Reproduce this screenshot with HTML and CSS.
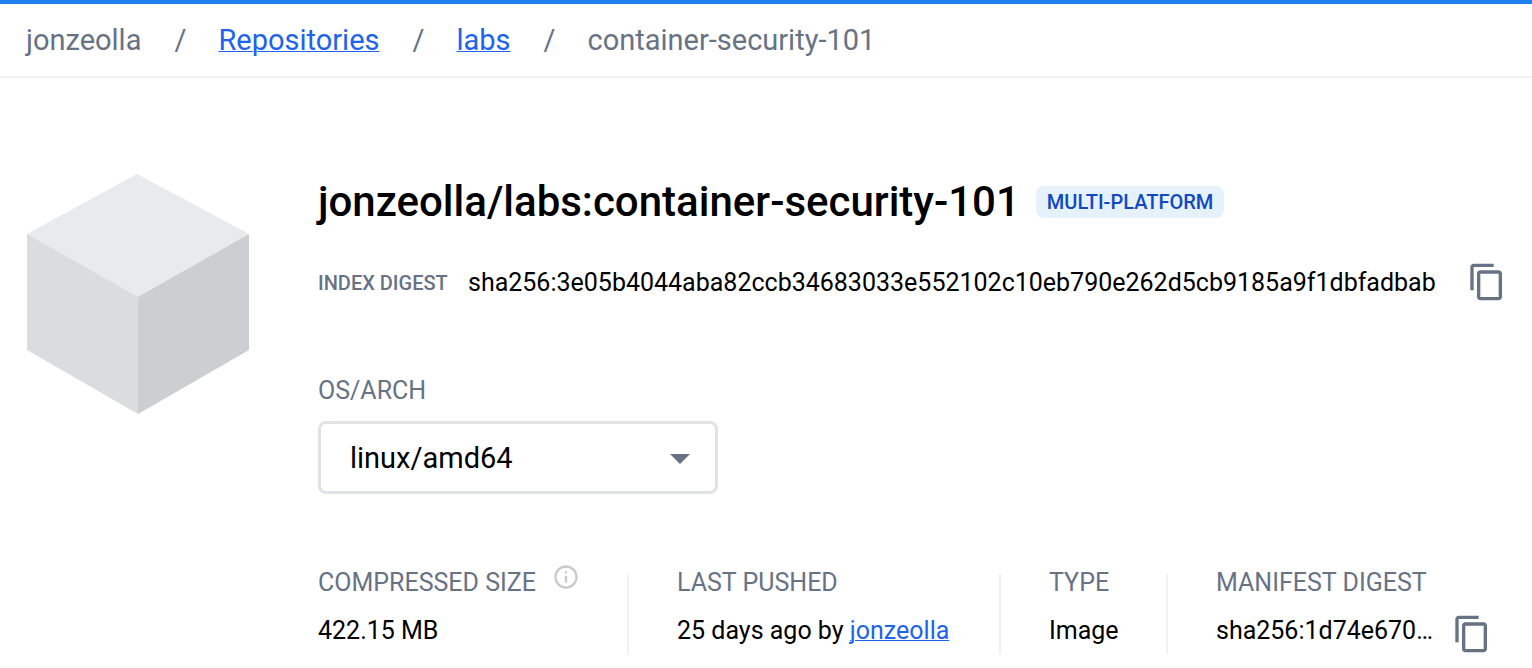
FILE: index.html
```html
<!DOCTYPE html>
<html lang="en">
<head>
<meta charset="utf-8">
<meta name="viewport" content="width=device-width, initial-scale=1">
<title>jonzeolla/labs:container-security-101</title>
<link rel="stylesheet" href="styles.css">
</head>
<body>
<header class="topbar">
  <nav aria-label="Breadcrumb">
    <ol class="crumbs">
      <li class="crumb">jonzeolla</li>
      <li class="crumb"><a href="#">Repositories</a></li>
      <li class="crumb"><a href="#">labs</a></li>
      <li class="crumb">container-security-101</li>
    </ol>
  </nav>
</header>
<main class="page">
  <svg class="cube" viewBox="0 0 222 240" aria-hidden="true">
    <path fill="#e8eaec" d="M110 0 222 60 111 124 0 60z"/>
    <path fill="#dbdcde" d="M0 60 111 123V240L0 176z"/>
    <path fill="#cbcfd2" d="M222 60 111 123V240L222 176z"/>
  </svg>
  <div class="details">
    <div class="title-row">
      <h1 class="title">jonzeolla/labs:container-security-101</h1>
      <span class="badge">MULTI-PLATFORM</span>
    </div>
    <div class="digest-row">
      <span class="digest-label">INDEX DIGEST</span>
      <span class="digest">sha256:3e05b4044aba82ccb34683033e552102c10eb790e262d5cb9185a9f1dbfadbab</span>
      <button class="copy" type="button" aria-label="Copy index digest">
        <svg class="copy-icon" viewBox="0 0 24 24"><path d="M16 1H4c-1.100 0-2 .9-2 2v14h2V3h12V1zm3 4H8c-1.100 0-2 .9-2 2v14c0 1.100.9 2 2 2h11c1.100 0 2-.9 2-2V7c0-1.100-.9-2-2-2zm0 16H8V7h11v14z"/></svg>
      </button>
    </div>
    <div class="field">
      <label class="label" for="arch">OS/ARCH</label>
      <div class="select-wrap">
        <select class="select" id="arch"><option>linux/amd64</option></select>
        <svg class="arrow" viewBox="0 0 20 10" aria-hidden="true"><path d="M0 0h20L10 10z"/></svg>
      </div>
    </div>
    <dl class="stats">
      <div class="stat">
        <dt class="label stat-label">COMPRESSED SIZE
          <svg class="info" viewBox="0 0 24 24" aria-hidden="true"><path d="M11 7h2v2h-2zm0 4h2v6h-2zm1-9C6.480 2 2 6.480 2 12s4.480 10 10 10 10-4.480 10-10S17.520 2 12 2zm0 18c-4.410 0-8-3.590-8-8s3.590-8 8-8 8 3.590 8 8-3.590 8-8 8z"/></svg>
        </dt>
        <dd class="value">422.15 MB</dd>
      </div>
      <div class="stat">
        <dt class="label stat-label">LAST PUSHED</dt>
        <dd class="value">25 days ago by <a href="#">jonzeolla</a></dd>
      </div>
      <div class="stat">
        <dt class="label stat-label">TYPE</dt>
        <dd class="value">Image</dd>
      </div>
      <div class="stat">
        <dt class="label stat-label">MANIFEST DIGEST</dt>
        <dd class="value value-copy">
          <span>sha256:1d74e670…</span>
          <button class="copy" type="button" aria-label="Copy manifest digest">
            <svg class="copy-icon" viewBox="0 0 24 24"><path d="M16 1H4c-1.100 0-2 .9-2 2v14h2V3h12V1zm3 4H8c-1.100 0-2 .9-2 2v14c0 1.100.9 2 2 2h11c1.100 0 2-.9 2-2V7c0-1.100-.9-2-2-2zm0 16H8V7h11v14z"/></svg>
          </button>
        </dd>
      </div>
    </dl>
  </div>
</main>
</body>
</html>
```
FILE: styles.css
```css
* { box-sizing: border-box; }
body {
  margin: 0;
  background: #fff;
  color: #000;
  font-family: Roboto, "Liberation Sans", sans-serif;
  font-size: 25px;
}
a {
  color: #1d63ed;
  text-decoration-thickness: 1px;
}
.topbar {
  border-top: 4px solid #1d82f0;
  border-bottom: 2px solid #f1f1f2;
  padding: 18px 26px;
}
.crumbs {
  display: flex;
  margin: 0;
  padding: 0;
  list-style: none;
  font-size: 29px;
  line-height: 36px;
  color: #677285;
}
.crumb + .crumb::before {
  content: "/";
  margin: 0 32px 0 33px;
}
.page {
  display: flex;
  align-items: flex-start;
  gap: 69px;
  padding: 96px 27px 14px;
}
.cube {
  flex: none;
  width: 222px;
  height: 240px;
}
.details { flex: 1; min-width: 0; }
.title-row {
  display: flex;
  align-items: center;
  gap: 16px;
}
.title {
  margin: 0;
  font-size: 42px;
  line-height: 56px;
  font-weight: 500;
}
.badge {
  padding: 0 11px;
  border-radius: 8px;
  background: #e5f2fc;
  color: #1048c4;
  font-size: 20px;
  line-height: 32px;
  font-weight: 500;
}
.digest-row {
  display: flex;
  align-items: flex-start;
  margin-top: 32px;
  line-height: 42px;
}
.digest-label {
  flex: none;
  width: 150px;
  color: #677285;
  font-size: 20px;
  font-weight: 500;
}
.copy {
  flex: none;
  width: 40px;
  height: 40px;
  padding: 0;
  border: 0;
  background: none;
  cursor: pointer;
}
.digest-row .copy { margin-left: 31px; }
.copy-icon {
  display: block;
  width: 40px;
  height: 40px;
  fill: #677285;
}
.field { margin-top: 70px; }
.label {
  display: block;
  color: #677285;
  font-size: 25px;
  line-height: 34px;
}
.select-wrap {
  position: relative;
  width: 400px;
  max-width: 100%;
  margin-top: 13px;
}
.select {
  display: block;
  width: 100%;
  height: 73px;
  padding: 0 29px;
  border: 3px solid #e1e2e6;
  border-radius: 8px;
  appearance: none;
  background: #fff;
  color: #000;
  font: inherit;
  font-size: 29px;
}
.arrow {
  position: absolute;
  right: 28px;
  top: 33px;
  width: 20px;
  height: 10px;
  fill: #677285;
  pointer-events: none;
}
.stats {
  display: grid;
  grid-template-columns: 309px 372px 167px 1fr;
  margin: 80px 0 0;
}
.stat {
  height: 80px;
  padding-left: 48px;
  border-left: 2px solid #f1f1f2;
  white-space: nowrap;
}
.stat:first-child { padding-left: 0; border-left: 0; }
.stat-label {
  display: flex;
  align-items: flex-start;
  gap: 16px;
  line-height: 18px;
}
.info {
  width: 28px;
  height: 28px;
  margin-top: -11px;
  margin-bottom: -12px;
  fill: #c9c9c9;
}
.value {
  height: 32px;
  margin: 22px 0 0;
  line-height: 34px;
}
.value-copy {
  display: flex;
  justify-content: space-between;
  padding-right: 13px;
}
```
